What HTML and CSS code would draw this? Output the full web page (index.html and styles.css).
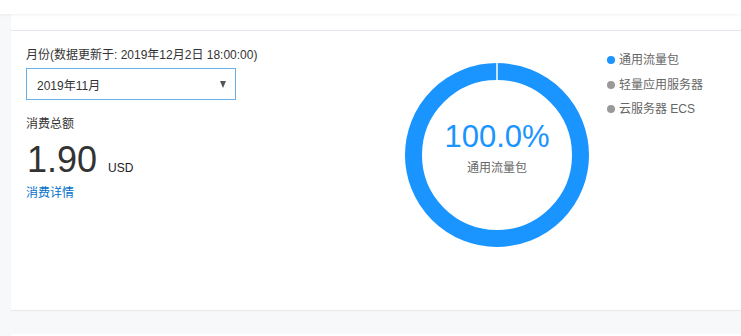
FILE: index.html
```html
<!DOCTYPE html>
<html lang="zh-CN">
<head>
  <meta charset="UTF-8">
  <title>费用概览</title>
  <link rel="stylesheet" href="styles.css">
</head>
<body>
  <div class="topbar"></div>
  <div class="main">
    <div class="card">
      <div class="card-head"></div>
      <div class="card-body">
        <div class="summary">
          <div class="label">月份(数据更新于: 2019年12月2日 18:00:00)</div>
          <div class="select">
            <span>2019年11月</span>
            <span class="arrow"></span>
          </div>
          <div class="label total-label">消费总额</div>
          <div class="amount">
            <span class="value">1.90</span>
            <span class="unit">USD</span>
          </div>
          <a href="#" class="link">消费详情</a>
        </div>
        <div class="chart">
          <svg width="184" height="184" viewBox="0 0 184 184">
            <circle cx="92" cy="92" r="83.5" fill="none" stroke="#1a94fe" stroke-width="17"/>
            <line x1="92" y1="0" x2="92" y2="18" stroke="#ffffff" stroke-width="1.5"/>
          </svg>
          <div class="chart-text">
            <div class="percent">100.0%</div>
            <div class="chart-name">通用流量包</div>
          </div>
        </div>
        <ul class="legend">
          <li><span class="dot active"></span>通用流量包</li>
          <li><span class="dot"></span>轻量应用服务器</li>
          <li><span class="dot"></span>云服务器 ECS</li>
        </ul>
      </div>
    </div>
    <div class="card next"></div>
  </div>
</body>
</html>
```

FILE: styles.css
```css
* {
  box-sizing: border-box;
  margin: 0;
  padding: 0;
}
body {
  font-family: 'Liberation Sans', 'Noto Sans CJK SC', sans-serif;
  font-size: 12px;
  color: #333;
  background: #f7f8fa;
}
.topbar {
  height: 14px;
  background: #fff;
  box-shadow: 0 1px 3px rgba(0,0,0,0.06);
  position: relative;
}
.main {
  padding-left: 11px;
}
.card {
  background: #fff;
  height: 296px;
  box-shadow: 0 1px 1px rgba(0,0,0,0.06);
}
.card.next {
  margin-top: 24px;
  height: 2px;
}
.card-head {
  height: 17px;
  border-bottom: 1px solid #e5e5ee;
}
.card-body {
  display: flex;
  padding: 16px 15px;
}
.summary {
  width: 379px;
}
.label {
  line-height: 16px;
}
.select {
  width: 210px;
  height: 32px;
  margin-top: 5px;
  border: 1px solid #6aaee6;
  display: flex;
  align-items: center;
  justify-content: space-between;
  padding: 0 9px 0 10px;
}
.arrow {
  width: 0;
  height: 0;
  border-left: 3.5px solid transparent;
  border-right: 3.5px solid transparent;
  border-top: 7px solid #555;
}
.total-label {
  margin-top: 16px;
}
.amount {
  display: flex;
  align-items: baseline;
  margin-top: 8px;
  height: 40px;
}
.value {
  font-size: 36px;
  line-height: 40px;
  color: #333;
  margin-left: 1px;
}
.unit {
  font-size: 12px;
  margin-left: 11px;
  color: #222;
}
.link {
  display: block;
  margin-top: 5px;
  line-height: 16px;
  color: #0070cc;
  text-decoration: none;
}
.chart {
  position: relative;
  width: 184px;
  height: 184px;
  margin-top: 16px;
}
.chart svg {
  display: block;
}
.chart-text {
  position: absolute;
  top: 57px;
  left: 0;
  width: 100%;
  text-align: center;
}
.percent {
  font-size: 31px;
  line-height: 34px;
  color: #1a94fe;
}
.chart-name {
  margin-top: 6px;
  line-height: 16px;
  color: #666;
}
.legend {
  list-style: none;
  margin-left: 18px;
  margin-top: 5px;
}
.legend li {
  display: flex;
  align-items: center;
  line-height: 16px;
  margin-bottom: 8.5px;
  color: #666;
}
.dot {
  width: 8px;
  height: 8px;
  border-radius: 50%;
  background: #999;
  margin-right: 4px;
}
.dot.active {
  background: #1a94fe;
}
```
